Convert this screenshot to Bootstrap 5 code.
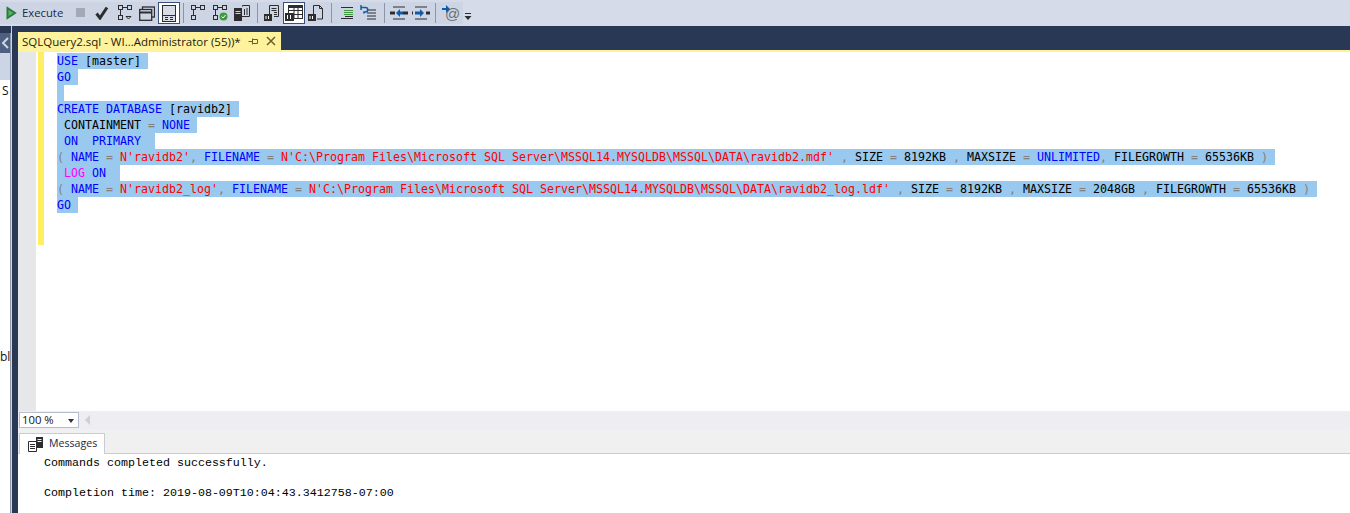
<!DOCTYPE html>
<html lang="en">
<head>
<meta charset="utf-8">
<title>SQLQuery2.sql</title>
<link rel="stylesheet" href="https://cdn.jsdelivr.net/npm/bootstrap@5.3.0/dist/css/bootstrap.min.css">
<style>
html,body{height:513px;overflow:hidden;background:#fff}
body{font-family:"Open Sans","Noto Sans",sans-serif;font-size:12px;color:#1e1e1e}
.shell{width:1350px;height:513px}
.tools{height:26px;background:#d5dbe9;padding:2px 0;flex:none}
.tools-group{height:22px;background:#cdd5e5;padding-left:4px;width:463px;flex:none}
.tools svg{display:block;flex:none}
.tb{width:22px;height:22px;display:flex;align-items:center;justify-content:center;flex:none}
.tb-on{background:#fff;border:1px solid #3a5078}
.tb-sep{width:1px;height:20px;background:#8b95a9;margin:1px 3px 0 4px;flex:none}
.tb-label{font-size:11.3px;width:44px;line-height:22px;color:#1e2a3e;flex:none;margin-left:5px}
.well{background:#293955;min-height:0}
.rail{width:18px;flex:none;position:relative;background:#293955}
.rail-panel{width:11px;margin-top:7px;border-right:1px solid #8d98ab}
.rail-head{height:20px;background:#4d6082;color:#cfd6e5;display:flex;align-items:center;justify-content:center}
.rail-gap{height:27px;background:#ccd5e5}
.rail-body{height:433px;background:#fff;font-size:12px;line-height:16px;color:#111;position:relative;overflow:hidden}
.rail-s{padding:3px 0 0 2px;height:269px}
.rail-strip{position:absolute;left:11px;top:0;bottom:0;width:1px;background:#cfd6e5}
.strip{height:24px;flex:none;align-items:flex-end}
.doc-tab{position:relative;width:263px;height:18px;background:#fff29d;font-size:11.5px;line-height:19px;padding-left:4px;color:#1c1c10}
.doc-tab span{white-space:nowrap}
.tab-ico{position:absolute;top:5px}
.pin-ico{left:230px}
.shut-ico{left:248px;top:4px}
.edit-top{height:2px;background:#fff29d;flex:none}
.editor{height:359px;background:#fff;flex:none}
.gutter{width:18px;background:#e6e7e8;flex:none}
.mark-col{width:20px;flex:none;padding-left:2px}
.mark-bar{width:6px;height:193px;background:#ffee62}
.code{padding:1px 0 0 1px;font-family:"DejaVu Sans Mono","Liberation Mono",monospace;font-size:11.63px;line-height:16px;white-space:pre;color:#000;min-width:0}
.ln{height:16px;display:block}
.ln>span.hl{display:inline-block;height:16px;background:#99c9ef}
.k{color:#0000ff}.s{color:#ff0000}.o{color:#808080}.m{color:#ff00ff}
.zoombar{height:18px;background:#eeeef2;flex:none;align-items:center}
.zoomsel{width:60px;height:16px;background:#fff;border:1px solid #b5bed0;font-size:11.300px;line-height:14px;padding-left:2px;margin-left:1px;position:relative;color:#111;font-family:"Open Sans",sans-serif}
.zoomsel i{position:absolute;right:4px;top:6px;width:0;height:0;border:3px solid transparent;border-top:4px solid #333;border-bottom:0}
.scroll-l{width:0;height:0;border:5px solid transparent;border-right:5px solid #cfd0d2;border-left:0;margin-left:6px}
.res-head{height:25px;background:#f0f0f0;border-bottom:1px solid #c9ccd1;flex:none;padding-left:1px}
.res-tab{width:86px;height:25px;background:#fff;border:1px solid #c9ccd1;border-bottom:0;margin-top:4px;font-size:10.6px;line-height:18px;padding-left:8px;color:#1d2a42;gap:5px}
.res-ico{margin-top:3px}
.res{flex:1 1 auto;background:#fff;padding:2px 0 0 26px;font-family:"Liberation Mono",monospace;font-size:11.67px;line-height:15px;white-space:pre;color:#000}
.res div{height:15px}
.tg-at{font-family:"Liberation Sans",sans-serif;font-size:15px;fill:#6d6f73;font-weight:400}
</style>
</head>
<body>
<div class="shell d-flex flex-column">
  <div class="tools d-flex">
   <div class="tools-group d-flex">
    <div class="tb" style="width:13px"><svg width="12" height="14" viewBox="0 0 12 14"><path d="M2.500 2 10 7 2.500 12z" fill="#5fae6b" stroke="#2a7d38" stroke-width="2"/></svg></div>
    <div class="tb-label">Execute</div>
    <div class="tb" style="margin-left:4px"><svg width="10" height="10"><rect width="9" height="9" fill="#a3a9b5"/></svg></div>
    <div class="tb" style="margin-left:-1px"><svg width="14" height="14" viewBox="0 0 14 14"><path d="M1.500 7.500 5 12 12 1.500" fill="none" stroke="#2d2d30" stroke-width="3"/></svg></div>
    <div class="tb" style="margin-left:1px"><svg width="16" height="16" viewBox="0 0 16 16" fill="none" stroke="#2d2d30"><rect x="1.500" y=".5" width="4" height="4"/><rect x="10.500" y=".5" width="4" height="4"/><rect x="1.500" y="10.500" width="4" height="4"/><path d="M5.500 2.500h5M3.500 4.500v6"/><path d="M9 11.500h5l-2.500 2.500z"/></svg></div>
    <div class="tb"><svg width="16" height="15" viewBox="0 0 16 15" fill="none" stroke="#2d2d30" stroke-width="1.300"><rect x="3.500" y="1" width="12" height="10"/><rect x=".7" y="3.500" width="12" height="10.800" fill="#cdd5e5"/><path d="M1 6.500h11" stroke-width="2"/></svg></div>
    <div class="tb tb-on"><svg width="14" height="17" viewBox="0 0 14 17" fill="none" stroke="#2d2d30"><rect x=".5" y=".5" width="13" height="16" fill="#d8dce6"/><path d="M1 10.500h12M3 12.500h3M8 12.500h3M3 14.500h3M8 14.500h3"/></svg></div>
    <div class="tb-sep" style="margin-left:3px"></div>
    <div class="tb"><svg width="16" height="16" viewBox="0 0 16 16" fill="none" stroke="#2d2d30"><rect x="1.500" y=".5" width="4" height="4"/><rect x="10.500" y=".5" width="4" height="4"/><rect x="1.500" y="10.500" width="4" height="4"/><path d="M5.500 2.500h5M3.500 4.500v6"/></svg></div>
    <div class="tb"><svg width="16" height="16" viewBox="0 0 16 16" fill="none" stroke="#2d2d30"><rect x="1.500" y=".5" width="4" height="4"/><rect x="10.500" y=".5" width="4" height="4"/><rect x="1.500" y="10.500" width="4" height="4"/><path d="M5.500 2.500h5M3.500 4.500v6"/><circle cx="11.500" cy="11.500" r="4" fill="#3f9a3f" stroke="none"/><path d="M9.500 11.500l1.500 1.500 2.500-3" stroke="#fff"/></svg></div>
    <div class="tb"><svg width="16" height="16" viewBox="0 0 16 16" fill="none" stroke="#2d2d30"><rect x="0" y="3" width="8" height="13" fill="#2d2d30" stroke="none"/><path d="M1.500 6.500h5M1.500 8.500h5" stroke="#cdd5e5"/><path d="M8.500 1.500V.5h7v11H8M10.500 4v6M13 3v7"/></svg></div>
    <div class="tb-sep"></div>
    <div class="tb"><svg width="16" height="16" viewBox="0 0 16 16" fill="none" stroke="#2d2d30"><path d="M5.500 9V.5h9v11H10M7.500 3.500h5M7.500 5.500h5M10 7.500h3M10 9.500h3"/><rect x=".5" y="9.500" width="7" height="6" fill="#2d2d30"/><path d="M2 11v3M4.500 11v3" stroke="#fff"/></svg></div>
    <div class="tb tb-on"><svg width="18" height="16" viewBox="0 0 18 16" fill="none" stroke="#2d2d30"><rect x="3.500" y=".5" width="14" height="13" fill="#fff"/><path d="M3.500 1.500h14" stroke-width="3"/><path d="M3.500 5.500h14M3.500 9.500h14M9 3v11M13 3v11"/><rect x=".5" y="8.500" width="8" height="7" fill="#2d2d30"/><path d="M2.500 10v4M5.500 10v4" stroke="#fff"/></svg></div>
    <div class="tb"><svg width="16" height="16" viewBox="0 0 16 16" fill="none" stroke="#2d2d30"><path d="M5.500 9V.5h6l3 3v10.500H9M11.500.5v3h3"/><rect x=".5" y="9.500" width="7" height="6" fill="#2d2d30"/><path d="M2 11v3M4.500 11v3" stroke="#fff"/></svg></div>
    <div class="tb-sep"></div>
    <div class="tb"><svg width="15" height="14" viewBox="0 0 15 14" fill="none" stroke="#2d2d30"><path d="M2 1.500h12M2 12.500h12"/><path d="M5 4.500h9M5 6.500h9M5 8.500h9" stroke="#3f9a3f"/><path d="M6 10.500h8"/></svg></div>
    <div class="tb"><svg width="16" height="16" viewBox="0 0 16 16" fill="none"><path d="M7 5h9M7 8h9M7 11h9M7 14h9" stroke="#2d2d30"/><path d="M1 2.500h4.500a2 2 0 0 1 0 4.500H4v1.500" stroke="#0e5ca8" stroke-width="1.600"/><path d="M1 0v5" stroke="#0e5ca8" stroke-width="1.500"/></svg></div>
    <div class="tb-sep" style="margin-left:5px"></div>
    <div class="tb"><svg width="18" height="16" viewBox="0 0 18 16" fill="none"><path d="M3 2h12M3 14h12" stroke="#2d2d30"/><path d="M0 8h5M13 8h5" stroke="#2d2d30" stroke-width="3"/><path d="M6 8l4-4v2.500h3v3h-3V12z" fill="#0e5ca8"/></svg></div>
    <div class="tb"><svg width="18" height="16" viewBox="0 0 18 16" fill="none"><path d="M3 2h12M3 14h12" stroke="#2d2d30"/><path d="M0 8h1M14 8h4" stroke="#2d2d30" stroke-width="3"/><path d="M12 8L8 4v2.500H3v3h5V12z" fill="#0e5ca8"/></svg></div>
    <div class="tb-sep" style="margin-left:3px;margin-right:4px"></div>
    <div class="tb"><svg width="18" height="18" viewBox="0 0 18 18"><text class="tg-at" x="3" y="15">@</text><path d="M0 5h4" stroke="#0e5ca8" stroke-width="2"/><path d="M4 1l4 4-4 4z" fill="#0e5ca8"/></svg></div>
   </div>
   <div class="tb" style="width:10px;margin-left:0;padding-top:9px"><svg width="8" height="9" viewBox="0 0 8 9"><path d="M1 .5h6" stroke="#2d2d30"/><path d="M.5 3h7L4 7z" fill="#2d2d30"/></svg></div>
  </div>
  <div class="well d-flex flex-fill">
    <div class="rail">
      <div class="rail-panel">
        <div class="rail-head"><svg width="8" height="12" viewBox="0 0 8 12"><path d="M7 1 2 6l5 5" fill="none" stroke="#cfd6e5" stroke-width="2"/></svg></div>
        <div class="rail-gap"></div>
        <div class="rail-body"><div class="rail-s">S</div><div>bl</div></div>
      </div>
      <div class="rail-strip"></div>
    </div>
    <div class="d-flex flex-column flex-fill" style="min-width:0">
      <div class="strip d-flex">
        <div class="doc-tab"><span>SQLQuery2.sql - WI...Administrator (55))*</span>
          <svg class="tab-ico pin-ico" width="11" height="9" viewBox="0 0 11 9" fill="none" stroke="#6b5f2c"><path d="M.5 4.500h3.500M4.500 1.500v6M4.500 2.500h5v4h-5"/></svg>
          <svg class="tab-ico shut-ico" width="10" height="10" viewBox="0 0 10 10" fill="none" stroke="#6b5f2c" stroke-width="1.500"><path d="M1 1l8 8M9 1l-8 8"/></svg>
        </div>
      </div>
      <div class="edit-top"></div>
      <div class="editor d-flex">
        <div class="gutter"></div>
        <div class="mark-col"><div class="mark-bar"></div></div>
        <div class="code flex-fill"><span class="ln"><span class="hl"><span class="k">USE</span> [master] </span></span><span class="ln"><span class="hl"><span class="k">GO</span> </span></span><span class="ln"><span class="hl"> </span></span><span class="ln"><span class="hl"><span class="k">CREATE DATABASE</span> [ravidb2] </span></span><span class="ln"><span class="hl"> CONTAINMENT <span class="o">=</span> <span class="k">NONE</span> </span></span><span class="ln"><span class="hl"> <span class="k">ON  PRIMARY</span>  </span></span><span class="ln"><span class="hl"><span class="o">(</span> <span class="k">NAME</span> <span class="o">=</span> <span class="s">N'ravidb2'</span><span class="o">,</span> <span class="k">FILENAME</span> <span class="o">=</span> <span class="s">N'C:\Program Files\Microsoft SQL Server\MSSQL14.MYSQLDB\MSSQL\DATA\ravidb2.mdf'</span> <span class="o">,</span> SIZE <span class="o">=</span> 8192KB <span class="o">,</span> MAXSIZE <span class="o">=</span> <span class="k">UNLIMITED</span><span class="o">,</span> FILEGROWTH <span class="o">=</span> 65536KB <span class="o">)</span> </span></span><span class="ln"><span class="hl"> <span class="m">LOG</span> <span class="k">ON</span>  </span></span><span class="ln"><span class="hl"><span class="o">(</span> <span class="k">NAME</span> <span class="o">=</span> <span class="s">N'ravidb2_log'</span><span class="o">,</span> <span class="k">FILENAME</span> <span class="o">=</span> <span class="s">N'C:\Program Files\Microsoft SQL Server\MSSQL14.MYSQLDB\MSSQL\DATA\ravidb2_log.ldf'</span> <span class="o">,</span> SIZE <span class="o">=</span> 8192KB <span class="o">,</span> MAXSIZE <span class="o">=</span> 2048GB <span class="o">,</span> FILEGROWTH <span class="o">=</span> 65536KB <span class="o">)</span> </span></span><span class="ln"><span class="hl"><span class="k">GO</span> </span></span></div>
      </div>
      <div class="zoombar d-flex">
        <div class="zoomsel">100 %<i></i></div>
        <div class="scroll-l"></div>
      </div>
      <div class="res-head d-flex">
        <div class="res-tab d-flex align-items-start">
          <svg class="res-ico" width="16" height="15" viewBox="0 0 16 15" fill="none" stroke="#2d2d30"><path d="M.5 4.500h8v10h-8zM2 7.500h5M2 9.500h5M2 11.500h5"/><rect x="8" y="0" width="7" height="11" fill="#2d2d30" stroke="none"/><path d="M9.500 2.500h4M9.500 4.500h4" stroke="#f0f0f0"/></svg>
          <span>Messages</span>
        </div>
      </div>
      <div class="res"><div>Commands completed successfully.</div><div></div><div>Completion time: 2019-08-09T10:04:43.3412758-07:00</div></div>
    </div>
  </div>
</div>
</body>
</html>
